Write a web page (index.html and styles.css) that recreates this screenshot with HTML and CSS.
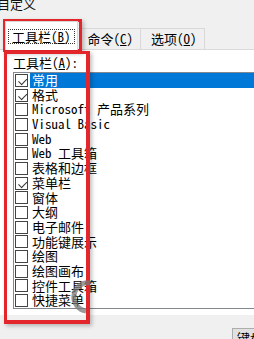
FILE: index.html
```html
<!DOCTYPE html>
<html lang="zh-CN">
<head>
<meta charset="utf-8">
<title>自定义</title>
<link rel="stylesheet" href="styles.css">
</head>
<body>
<div class="title">自定义</div>
<div class="tabs">
  <div class="tab active"><span class="focus">工具栏(<u>B</u>)</span></div>
  <div class="tab">命令(<u>C</u>)</div>
  <div class="tab">选项(<u>O</u>)</div>
</div>
<div class="panel">
  <div class="label">工具栏(<u>A</u>):</div>
  <ul class="list">
    <li class="row"><span class="cb checked"></span><span class="text selected">常用</span></li>
    <li class="row"><span class="cb checked"></span><span class="text">格式</span></li>
    <li class="row"><span class="cb"></span><span class="text">Microsoft 产品系列</span></li>
    <li class="row"><span class="cb"></span><span class="text">Visual Basic</span></li>
    <li class="row"><span class="cb"></span><span class="text">Web</span></li>
    <li class="row"><span class="cb"></span><span class="text">Web 工具箱</span></li>
    <li class="row"><span class="cb"></span><span class="text">表格和边框</span></li>
    <li class="row"><span class="cb checked"></span><span class="text">菜单栏</span></li>
    <li class="row"><span class="cb"></span><span class="text">窗体</span></li>
    <li class="row"><span class="cb"></span><span class="text">大纲</span></li>
    <li class="row"><span class="cb"></span><span class="text">电子邮件</span></li>
    <li class="row"><span class="cb"></span><span class="text">功能键展示</span></li>
    <li class="row"><span class="cb"></span><span class="text">绘图</span></li>
    <li class="row"><span class="cb"></span><span class="text">绘图画布</span></li>
    <li class="row"><span class="cb"></span><span class="text">控件工具箱</span></li>
    <li class="row"><span class="cb"></span><span class="text">快捷菜单</span></li>
  </ul>
</div>
<div class="footer">
  <div class="btn">键盘(<u>K</u>)...</div>
</div>
<div class="mark mark-tab"></div>
<div class="mark mark-list"></div>
<svg class="busy" width="30" height="40" viewBox="0 0 30 40">
  <path d="M24 6 A14 14 0 0 0 20 34" fill="none" stroke="rgba(120,120,120,0.75)" stroke-width="5"/>
</svg>
</body>
</html>
```
FILE: styles.css
```css
html, body {
  margin: 0;
  padding: 0;
}
body {
  width: 254px;
  height: 339px;
  overflow: hidden;
  position: relative;
  background: #f0f0f0;
  color: #000;
  font-family: "Noto Sans Mono CJK SC", "Noto Sans CJK SC", "Liberation Mono", monospace;
  font-size: 13px;
}
u {
  text-decoration: underline;
  text-underline-offset: 1px;
}
.title {
  height: 19px;
  line-height: 7px;
  font-size: 13px;
  margin-left: -3px;
  color: #111;
}
.tabs {
  display: flex;
  align-items: flex-end;
  height: 30px;
  padding-left: 5px;
}
.tab {
  box-sizing: border-box;
  height: 21px;
  border: 1px solid #d9d9d9;
  border-bottom: none;
  background: #f0f0f0;
  display: flex;
  align-items: center;
  padding: 0 7px 0 10px;
  line-height: 14px;
}
.tab + .tab {
  border-left: none;
}
.tab.active {
  height: 29px;
  margin-bottom: -1px;
  background: #fff;
  padding: 0 2px;
  position: relative;
  z-index: 1;
  align-items: flex-start;
  padding-top: 7px;
}
.focus {
  display: block;
  border: 1px dotted #333;
  padding: 0 3px;
  line-height: 13px;
}
.panel {
  box-sizing: border-box;
  height: 266px;
  background: #fff;
  border-top: 1px solid #d9d9d9;
  padding-top: 6px;
}
.label {
  margin-left: 13px;
  line-height: 14px;
}
.list {
  list-style: none;
  margin: 2px -10px 0 13px;
  padding: 0;
  border: 1px solid #828790;
  background: #fff;
}
.row {
  height: 14.7px;
  display: flex;
  align-items: center;
}
.cb {
  box-sizing: border-box;
  width: 13px;
  height: 13px;
  margin-left: 1px;
  border: 1px solid #444;
  background: #fff;
  flex: none;
  position: relative;
}
.cb.checked::after {
  content: "";
  position: absolute;
  left: 2px;
  top: 1px;
  width: 7px;
  height: 4px;
  border-left: 1.5px solid #333;
  border-bottom: 1.5px solid #333;
  transform: rotate(-45deg) translate(-1px, 2px);
}
.text {
  flex: 1;
  margin-left: 2px;
  padding-left: 2px;
  line-height: 14.7px;
  height: 14.7px;
  white-space: nowrap;
}
.text.selected {
  background: #0078d7;
  color: #fff;
}
.footer {
  height: 24px;
  overflow: hidden;
}
.btn {
  box-sizing: border-box;
  margin: 13px 0 0 232px;
  width: 60px;
  height: 22px;
  border: 1px solid #adadad;
  background: #e1e1e1;
  padding: 2px 0 0 4px;
  line-height: 14px;
  white-space: nowrap;
}
.mark {
  position: absolute;
  border: 3px solid #e3262b;
  box-sizing: border-box;
  box-shadow: 2px 2px 4px rgba(0,0,0,0.25);
}
.mark-tab {
  left: 3px;
  top: 19px;
  width: 79px;
  height: 33px;
}
.mark-list {
  left: 4px;
  top: 51px;
  width: 86px;
  height: 273px;
  border-width: 3px 4px 4px 3px;
}
.busy {
  position: absolute;
  left: 66px;
  top: 277px;
}
```
